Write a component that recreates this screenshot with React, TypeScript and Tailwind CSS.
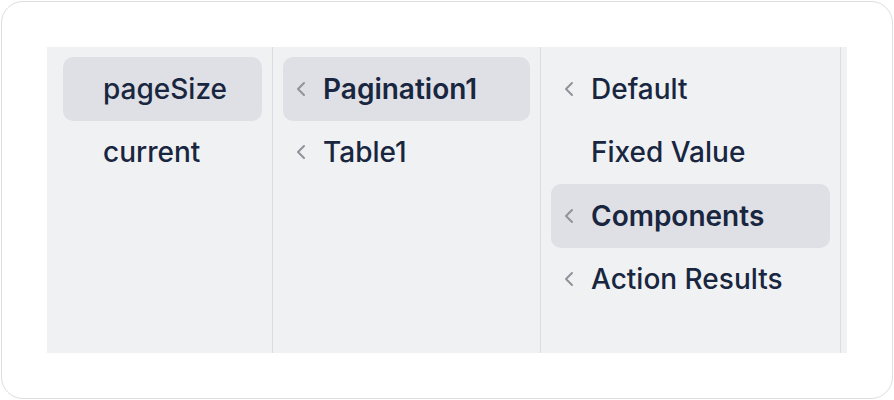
import React from 'react';
import { ChevronLeft } from 'lucide-react';

type Item = { label: string; chevron?: boolean; active?: boolean; bold?: boolean };

const columns: { width: string; items: Item[] }[] = [
  {
    width: 'w-[220px]',
    items: [
      { label: 'pageSize', active: true },
      { label: 'current' },
    ],
  },
  {
    width: 'w-[268px]',
    items: [
      { label: 'Pagination1', chevron: true, active: true, bold: true },
      { label: 'Table1', chevron: true },
    ],
  },
  {
    width: 'w-[300px]',
    items: [
      { label: 'Default', chevron: true },
      { label: 'Fixed Value' },
      { label: 'Components', chevron: true, active: true, bold: true },
      { label: 'Action Results', chevron: true },
    ],
  },
];

const App: React.FC = () => {
  return (
    <div className="w-[894px] h-[400px] p-px bg-white" style={{ fontFamily: 'Inter, "Noto Sans", sans-serif' }}>
      <div className="w-full h-full border border-[#dcdee2] rounded-[22px] bg-white pt-[45px] pl-[45px]">
        <div className="w-[800px] h-[306px] bg-[#f0f1f3] flex px-[6px]">
          {columns.map((col, ci) => (
            <div key={ci} className={`${col.width} h-full border-r border-[#dcdde2] px-[10px] pt-[10px]`}>
              {col.items.map((it) => (
                <div
                  key={it.label}
                  className={`h-[63.5px] flex items-center rounded-[10px] text-[28px] leading-none text-[#19263f] ${it.active ? 'bg-[#dfe0e5]' : ''} ${it.bold ? 'font-semibold' : 'font-medium'} ${it.chevron ? 'pl-[6px]' : 'pl-[40px]'}`}
                >
                  {it.chevron && (
                    <ChevronLeft size={24} strokeWidth={2} className="text-[#909399] mr-[10px] shrink-0" />
                  )}
                  <span>{it.label}</span>
                </div>
              ))}
            </div>
          ))}
        </div>
      </div>
    </div>
  );
};

export default App;
